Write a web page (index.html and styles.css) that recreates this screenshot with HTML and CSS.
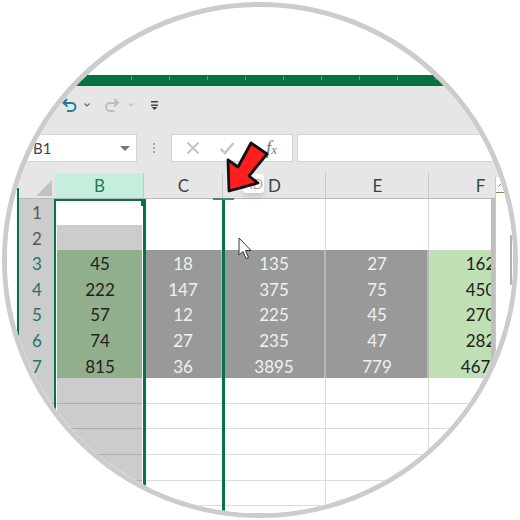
FILE: index.html
```html
<!DOCTYPE html>
<html lang="en">
<head>
  <meta charset="UTF-8" />
  <title>Excel column width</title>
  <link rel="stylesheet" href="styles.css">
</head>
<body>
<div class="lens">
  <div class="title-bar"></div>

  <div class="ribbon">
    <!-- Quick access -->
    <div class="qat">
      <svg class="undo" width="15" height="14" viewBox="0 0 15 14"><path d="M5 1 1.5 5 5.500 8.500M2 5H9.500a3.700 3.700 0 0 1 0 8H5"/></svg>
      <svg class="chev" width="6" height="4" viewBox="0 0 6 4"><path d="M.5.500 3 3 5.500.500"/></svg>
      <svg class="redo" width="16" height="14" viewBox="0 0 15 14"><path d="M10 1 13.500 5 9.500 8.500M13 5H5.500a3.700 3.700 0 0 0 0 8H10"/></svg>
      <svg class="chev off" width="6" height="4" viewBox="0 0 6 4"><path d="M.5.500 3 3 5.500.500"/></svg>
      <svg class="custom" width="7" height="9" viewBox="0 0 7 9"><path d="M0 0h7v1.500H0zM0 3.500h7v1.500H0zM.5 6h6L3.500 9z"/></svg>
    </div>

    <!-- Name box and formula bar -->
    <div class="formula-row">
      <div class="name-box"><span>B1</span><i class="tri"></i></div>
      <div class="grip"><i></i><i></i><i></i></div>
      <div class="fx-box">
        <svg class="cancel" width="14" height="14" viewBox="0 0 14 14"><path d="M1.500 1.500 12.500 12.500M12.500 1.500 1.500 12.500"/></svg>
        <svg class="enter" width="16" height="14" viewBox="0 0 16 14"><path d="M1.500 8 6 12 14.500 2"/></svg>
        <span class="fx">f<small>x</small></span>
      </div>
      <div class="formula-input"></div>
    </div>
  </div>

  <div class="sheet">
    <div class="sheet-main">
      <div class="col-heads">
        <div class="corner"></div>
        <div class="col-head active">B</div>
        <div class="col-head">C</div>
        <div class="col-head">D</div>
        <div class="col-head">E</div>
        <div class="col-head">F</div>
      </div>

      <div class="rows">
        <div class="row"><div class="row-head plain">1</div><div class="cell"></div><div class="cell"></div><div class="cell"></div><div class="cell"></div><div class="cell"></div></div>
        <div class="row"><div class="row-head plain">2</div><div class="cell b-grey"></div><div class="cell"></div><div class="cell"></div><div class="cell"></div><div class="cell"></div></div>
        <div class="row"><div class="row-head tick-8">3</div><div class="cell b-sel">45</div><div class="cell dim">18</div><div class="cell dim">135</div><div class="cell dim">27</div><div class="cell sum">162</div></div>
        <div class="row"><div class="row-head">4</div><div class="cell b-sel">222</div><div class="cell dim">147</div><div class="cell dim">375</div><div class="cell dim">75</div><div class="cell sum">450</div></div>
        <div class="row"><div class="row-head tick-22">5</div><div class="cell b-sel">57</div><div class="cell dim">12</div><div class="cell dim">225</div><div class="cell dim">45</div><div class="cell sum">270</div></div>
        <div class="row"><div class="row-head tick-22">6</div><div class="cell b-sel">74</div><div class="cell dim">27</div><div class="cell dim">235</div><div class="cell dim">47</div><div class="cell sum">282</div></div>
        <div class="row"><div class="row-head tick-18">7</div><div class="cell b-sel">815</div><div class="cell dim">36</div><div class="cell dim">3895</div><div class="cell dim">779</div><div class="cell sum">4674</div></div>
        <div class="row"><div class="row-head"></div><div class="cell b-grey"></div><div class="cell"></div><div class="cell"></div><div class="cell"></div><div class="cell"></div></div>
        <div class="row"><div class="row-head"></div><div class="cell b-grey"></div><div class="cell"></div><div class="cell"></div><div class="cell"></div><div class="cell"></div></div>
        <div class="row"><div class="row-head"></div><div class="cell b-grey"></div><div class="cell"></div><div class="cell"></div><div class="cell"></div><div class="cell"></div></div>
        <div class="row"><div class="row-head"></div><div class="cell b-grey"></div><div class="cell"></div><div class="cell"></div><div class="cell"></div><div class="cell"></div></div>
        <div class="row"><div class="row-head"></div><div class="cell b-grey"></div><div class="cell"></div><div class="cell"></div><div class="cell"></div><div class="cell"></div></div>
        <div class="row"><div class="row-head"></div><div class="cell b-grey"></div><div class="cell"></div><div class="cell"></div><div class="cell"></div><div class="cell"></div></div>

        <!-- Lines over the grid -->
        <div class="sel-col"><i class="handle"></i></div>
        <div class="drag-line"></div>
      </div>
    </div>

    <div class="vscroll">
      <div class="vscroll-btn"><svg width="7" height="4" viewBox="0 0 7 4"><path d="M.5 3.500 3.500.5 6.500 3.500"/></svg></div>
      <div class="vscroll-thumb"></div>
    </div>
  </div>

  <!-- Things lying over the sheet -->
  <div class="edge-line"></div>
  <div class="drag-cap"></div>
  <div class="size-tip">AD</div>
  <svg class="pointer" width="15" height="23" viewBox="0 0 15 23"><path d="M1 1V18L5 14.500 8 21.500 10.500 20.500 7.500 13.500H13Z"/></svg>
  <svg class="red-arrow" width="52" height="56" viewBox="220 140 52 56"><path d="M228 160 238 167 251 143 267 154 249 176 258 183 229 191Z"/></svg>
</div>
</body>
</html>
```

FILE: styles.css
```css
body {
  margin: 0;
  background: #fff;
  font-family: Lato, "Open Sans", sans-serif;
}
.lens {
  position: relative;
  box-sizing: border-box;
  width: 516px;
  height: 516px;
  margin: 2px;
  padding-top: 68px;
  border: 5px solid #ccc;
  border-radius: 50%;
  background: #fff;
  overflow: hidden;
}
.title-bar {
  height: 11px;
  border-top: 1px solid #2d5a44;
  box-sizing: border-box;
  background:
    repeating-linear-gradient(90deg, transparent 0 1px, #5f9e84 1px 2px, transparent 2px 38px) 123px 0 / 100% 4px no-repeat,
    #057342;
}
.ribbon {
  height: 87px;
  background: #e6e6e6;
}

/* quick access */
.qat {
  display: flex;
  align-items: center;
  height: 38px;
  padding-left: 55px;
}
.qat svg {
  flex: none;
  fill: none;
}
.undo {
  stroke: #1c7f9f;
  stroke-width: 2;
}
.redo {
  margin-left: 14px;
  stroke: #bdbdbd;
  stroke-width: 2;
}
.chev {
  margin-left: 7px;
  stroke: #6a6a5e;
  stroke-width: 1.2;
}
.chev.off {
  margin-left: 8px;
  stroke: #c4c4c4;
}
.qat .custom {
  margin-left: 17px;
  fill: #444;
}

/* formula bar */
.formula-row {
  display: flex;
  height: 28px;
  margin-top: 10px;
}
.name-box, .fx-box, .formula-input {
  box-sizing: border-box;
  background: #fff;
  border: 1px solid #d4d4d4;
}
.name-box {
  display: flex;
  align-items: center;
  justify-content: space-between;
  width: 130px;
  padding: 0 6px 0 25px;
  font-size: 15px;
  color: #444;
}
.tri {
  width: 0;
  height: 0;
  border-left: 5px solid transparent;
  border-right: 5px solid transparent;
  border-top: 5px solid #777;
}
.grip {
  display: flex;
  flex-direction: column;
  align-items: center;
  justify-content: center;
  gap: 2px;
  width: 34px;
}
.grip i {
  width: 2px;
  height: 2px;
  background: #a5a5a5;
}
.fx-box {
  display: flex;
  align-items: center;
  width: 122px;
  padding-left: 14px;
}
.fx-box svg {
  flex: none;
  fill: none;
}
.cancel {
  stroke: #c4c4c4;
  stroke-width: 1.8;
}
.enter {
  margin-left: 19px;
  stroke: #c8c8c8;
  stroke-width: 2.6;
}
.fx {
  margin-left: 31px;
  font-family: "Liberation Serif", serif;
  font-style: italic;
  font-size: 19px;
  color: #777;
}
.fx small {
  font-size: 13px;
}
.formula-input {
  flex: 1;
  margin-left: 4px;
}

/* sheet */
.sheet {
  display: flex;
  padding-left: 10px;
  background: linear-gradient(#e6e6e6 15px, #fff 15px);
}
.sheet-main {
  flex: none;
  width: 478px;
}
.col-heads, .row {
  display: grid;
  grid-template-columns: 38px 89px 79px 103px 103px 103px;
}
.col-heads {
  height: 26px;
  overflow: hidden;
  background: #e6e6e6;
  border-bottom: 1px solid #b8b8b8;
  box-sizing: border-box;
}
.corner {
  margin: 7px 3px 3px 19px;
  background: #c2c2c2;
  clip-path: polygon(100% 0, 100% 100%, 0 100%);
}
.col-head {
  box-sizing: border-box;
  padding-left: 1px;
  border-right: 1px solid #c6c6c6;
  font-size: 17px;
  line-height: 26px;
  text-align: center;
  color: #36474c;
}
.col-head.active {
  background: #c5efdc;
  color: #217a5a;
}
.rows {
  position: relative;
  box-sizing: border-box;
  width: 478px;
  height: 333px;
  border-right: 4px solid #bfbfbf;
  overflow: hidden;
}
.row {
  height: 25.6px;
  font-size: 17px;
  line-height: 27.5px;
  text-align: center;
}
.row-head {
  margin-left: 2px;
  background: #ccc linear-gradient(#aaa, #aaa) right bottom / 100% 1px no-repeat;
  color: #1d7461;
}
.row-head.plain {
  background-color: #ccc;
  color: #4d5c55;
}
.row-head.tick-8 {
  background-size: 8px 1px;
}
.row-head.tick-22 {
  background-size: 22px 1px;
}
.row-head.tick-18 {
  background-size: 18px 1px;
}
.cell {
  box-sizing: border-box;
  background: #fff;
  border-bottom: 1px solid #dcdcdc;
  border-right: 1px solid #dcdcdc;
  color: #222;
  white-space: nowrap;
}
.cell.b-grey {
  margin: 0 2px;
  background: #ccc;
  border-right: 0;
  border-bottom-color: #adadad;
}
.cell.b-sel {
  margin: 0 2px;
  padding-left: 1px;
  background: #91af8c;
  border: 0;
}
.cell.dim {
  padding-left: 1px;
  background: #999;
  border-bottom: 2px solid #b8b8b8;
  border-right: 2px solid #b8b8b8;
  color: #f0f0f0;
}
.cell.sum {
  background: #bfdfb5;
  border: 0;
}
.sel-col {
  position: absolute;
  top: 0;
  left: 37px;
  width: 87px;
  height: 100%;
  border: solid #057342;
  border-width: 2px 3px 0 2px;
}
.handle {
  position: absolute;
  top: 0;
  right: -3px;
  width: 5px;
  height: 5px;
  background: #057342;
}
.drag-line {
  position: absolute;
  top: 0;
  left: 205px;
  width: 3px;
  height: 100%;
  background: #057342;
}
.vscroll {
  flex: 1;
  margin-top: 4px;
  background: #fff;
  border-left: 1px solid #c8c8c8;
}
.vscroll-btn {
  display: flex;
  align-items: center;
  justify-content: center;
  width: 11px;
  height: 15px;
  border-bottom: 1px solid #8c7c58;
}
.vscroll-btn svg {
  fill: none;
  stroke: #777;
}
.vscroll-thumb {
  width: 2px;
  height: 50px;
  margin: 42px 0 0 14px;
  background: #b0b0b0;
}

/* overlays */
.edge-line {
  position: absolute;
  top: 181px;
  left: 10px;
  width: 2px;
  height: 160px;
  background: #057342;
}
.drag-cap {
  position: absolute;
  top: 191px;
  left: 206px;
  width: 21px;
  height: 2px;
  background: #3f8f70;
}
.size-tip {
  position: absolute;
  top: 167px;
  left: 236px;
  box-sizing: border-box;
  width: 21px;
  height: 19px;
  border-radius: 3px;
  background: #fff;
  box-shadow: 0 4px 5px rgba(0,0,0,0.12);
  font-size: 14px;
  line-height: 19px;
  text-align: right;
  color: #aaa;
  padding-right: 2px;
}
.pointer {
  position: absolute;
  top: 230px;
  left: 231px;
  fill: #fff;
  stroke: #333;
  stroke-width: 1;
}
.red-arrow {
  position: absolute;
  top: 133px;
  left: 213px;
  fill: #ff1e1e;
  stroke: #111;
  stroke-width: 2.8;
  stroke-linejoin: round;
}
```
